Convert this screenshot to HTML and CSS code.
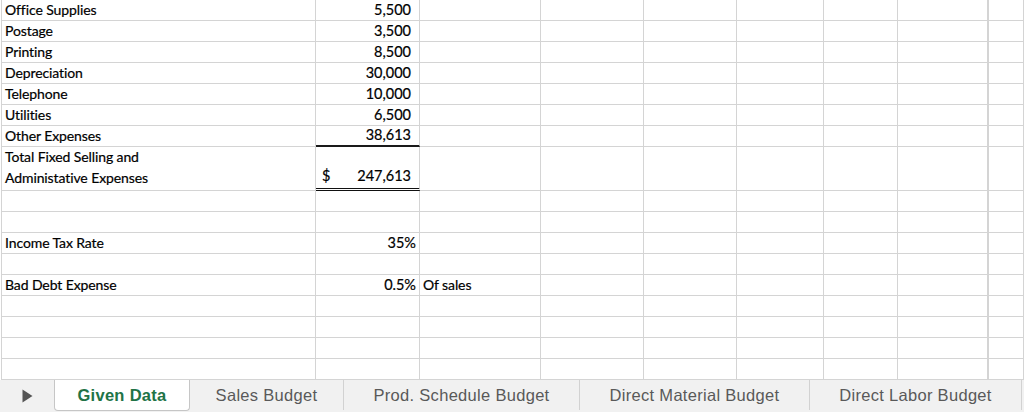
FILE: index.html
```html
<!DOCTYPE html>
<html>
<head>
<meta charset="utf-8">
<link rel="stylesheet" href="styles.css">
</head>
<body>
<div class="sheet">
  <div class="row"><div class="c lbl">Office Supplies</div><div class="c num">5,500</div><div class="c"></div><div class="c"></div><div class="c"></div><div class="c"></div><div class="c"></div><div class="c h"></div><div class="c"></div></div>
  <div class="row"><div class="c lbl">Postage</div><div class="c num">3,500</div><div class="c"></div><div class="c"></div><div class="c"></div><div class="c"></div><div class="c"></div><div class="c h"></div><div class="c"></div></div>
  <div class="row"><div class="c lbl">Printing</div><div class="c num">8,500</div><div class="c"></div><div class="c"></div><div class="c"></div><div class="c"></div><div class="c"></div><div class="c h"></div><div class="c"></div></div>
  <div class="row"><div class="c lbl">Depreciation</div><div class="c num">30,000</div><div class="c"></div><div class="c"></div><div class="c"></div><div class="c"></div><div class="c"></div><div class="c h"></div><div class="c"></div></div>
  <div class="row"><div class="c lbl">Telephone</div><div class="c num">10,000</div><div class="c"></div><div class="c"></div><div class="c"></div><div class="c"></div><div class="c"></div><div class="c h"></div><div class="c"></div></div>
  <div class="row"><div class="c lbl">Utilities</div><div class="c num">6,500</div><div class="c"></div><div class="c"></div><div class="c"></div><div class="c"></div><div class="c"></div><div class="c h"></div><div class="c"></div></div>
  <div class="row"><div class="c lbl">Other Expenses</div><div class="c num under">38,613</div><div class="c"></div><div class="c"></div><div class="c"></div><div class="c"></div><div class="c"></div><div class="c h"></div><div class="c"></div></div>
  <div class="row tall"><div class="c lbl wrap">Total Fixed Selling and<br>Administative Expenses</div><div class="c acct dbl"><span>$</span><span>247,613</span></div><div class="c"></div><div class="c"></div><div class="c"></div><div class="c"></div><div class="c"></div><div class="c h"></div><div class="c"></div></div>
  <div class="row"><div class="c lbl"></div><div class="c"></div><div class="c"></div><div class="c"></div><div class="c"></div><div class="c"></div><div class="c"></div><div class="c h"></div><div class="c"></div></div>
  <div class="row"><div class="c lbl"></div><div class="c"></div><div class="c"></div><div class="c"></div><div class="c"></div><div class="c"></div><div class="c"></div><div class="c h"></div><div class="c"></div></div>
  <div class="row"><div class="c lbl">Income Tax Rate</div><div class="c pct">35%</div><div class="c"></div><div class="c"></div><div class="c"></div><div class="c"></div><div class="c"></div><div class="c h"></div><div class="c"></div></div>
  <div class="row"><div class="c lbl"></div><div class="c"></div><div class="c"></div><div class="c"></div><div class="c"></div><div class="c"></div><div class="c"></div><div class="c h"></div><div class="c"></div></div>
  <div class="row"><div class="c lbl">Bad Debt Expense</div><div class="c pct">0.5%</div><div class="c note">Of sales</div><div class="c"></div><div class="c"></div><div class="c"></div><div class="c"></div><div class="c h"></div><div class="c"></div></div>
  <div class="row"><div class="c lbl"></div><div class="c"></div><div class="c"></div><div class="c"></div><div class="c"></div><div class="c"></div><div class="c"></div><div class="c h"></div><div class="c"></div></div>
  <div class="row"><div class="c lbl"></div><div class="c"></div><div class="c"></div><div class="c"></div><div class="c"></div><div class="c"></div><div class="c"></div><div class="c h"></div><div class="c"></div></div>
  <div class="row"><div class="c lbl"></div><div class="c"></div><div class="c"></div><div class="c"></div><div class="c"></div><div class="c"></div><div class="c"></div><div class="c h"></div><div class="c"></div></div>
  <div class="row"><div class="c lbl"></div><div class="c"></div><div class="c"></div><div class="c"></div><div class="c"></div><div class="c"></div><div class="c"></div><div class="c h"></div><div class="c"></div></div>
</div>
<div class="tabbar">
  <div class="nav"><svg width="11" height="14" viewBox="0 0 11 14"><path d="M0.5 0.5 L10.5 7 L0.5 13.5 Z" fill="#555555"/></svg></div>
  <div class="tab active t1">Given Data</div>
  <div class="tab t2">Sales Budget</div>
  <div class="tab t3">Prod. Schedule Budget</div>
  <div class="tab t4">Direct Material Budget</div>
  <div class="tab t5">Direct Labor Budget</div>
</div>
</body>
</html>
```
FILE: styles.css
```css
html, body {
  margin: 0;
  padding: 0;
  width: 1024px;
  height: 412px;
  overflow: hidden;
  background: #ffffff;
}

.sheet {
  margin-left: 1px;
  border-left: 1px solid #d4d4d4;
  display: flex;
  flex-direction: column;
  font-family: Lato, "Liberation Sans", sans-serif;
  font-size: 14.5px;
  color: #000000;
  -webkit-text-stroke: 0.2px #000000;
}

.row {
  display: grid;
  grid-template-columns: 314px 104px 121px 103px 93px 87px 74px 91px 1fr;
  height: 21px;
}

.row.tall {
  height: 44px;
}

.c {
  box-sizing: border-box;
  border-right: 1px solid #d4d4d4;
  border-bottom: 1px solid #d4d4d4;
  display: flex;
  align-items: flex-end;
  line-height: 20px;
  white-space: nowrap;
  overflow: hidden;
}

.c.h {
  border-right-width: 2px;
}

.lbl {
  padding-left: 3px;
  font-size: 14px;
  letter-spacing: -0.1px;
}

.wrap {
  line-height: 21px;
  padding-bottom: 2px;
}

.num {
  justify-content: flex-end;
  padding-right: 8px;
}

.pct {
  justify-content: flex-end;
  padding-right: 3px;
}

.note {
  padding-left: 3px;
  font-size: 14px;
  letter-spacing: -0.1px;
}

.acct {
  justify-content: space-between;
  padding: 0 8px 2px 6px;
  line-height: 21px;
}

.under {
  border-bottom: 2px solid #1a1a1a;
}

.dbl {
  border-bottom: 3px double #111111;
}

.tabbar {
  height: 32px;
  background: #f1f1f1;
  display: flex;
  align-items: flex-start;
  font-family: "Liberation Sans", Arial, sans-serif;
  font-size: 16.5px;
  letter-spacing: 0.3px;
  color: #595959;
}

.nav {
  width: 54px;
  height: 32px;
  display: flex;
  align-items: center;
  padding-left: 22px;
  box-sizing: border-box;
}

.tab {
  box-sizing: border-box;
  height: 30px;
  display: flex;
  align-items: center;
  justify-content: center;
  border-right: 1px solid #d2d2d2;
  flex: none;
  padding-top: 1px;
}

.tab.active {
  height: 31px;
  background: #ffffff;
  border: 1px solid #c6c6c6;
  border-top: none;
  border-radius: 0 0 4px 4px;
  color: #217346;
  font-weight: bold;
}

.t1 { width: 136px; }
.t2 { width: 154px; }
.t3 { width: 236px; }
.t4 { width: 230px; }
.t5 { width: 212px; }
```
